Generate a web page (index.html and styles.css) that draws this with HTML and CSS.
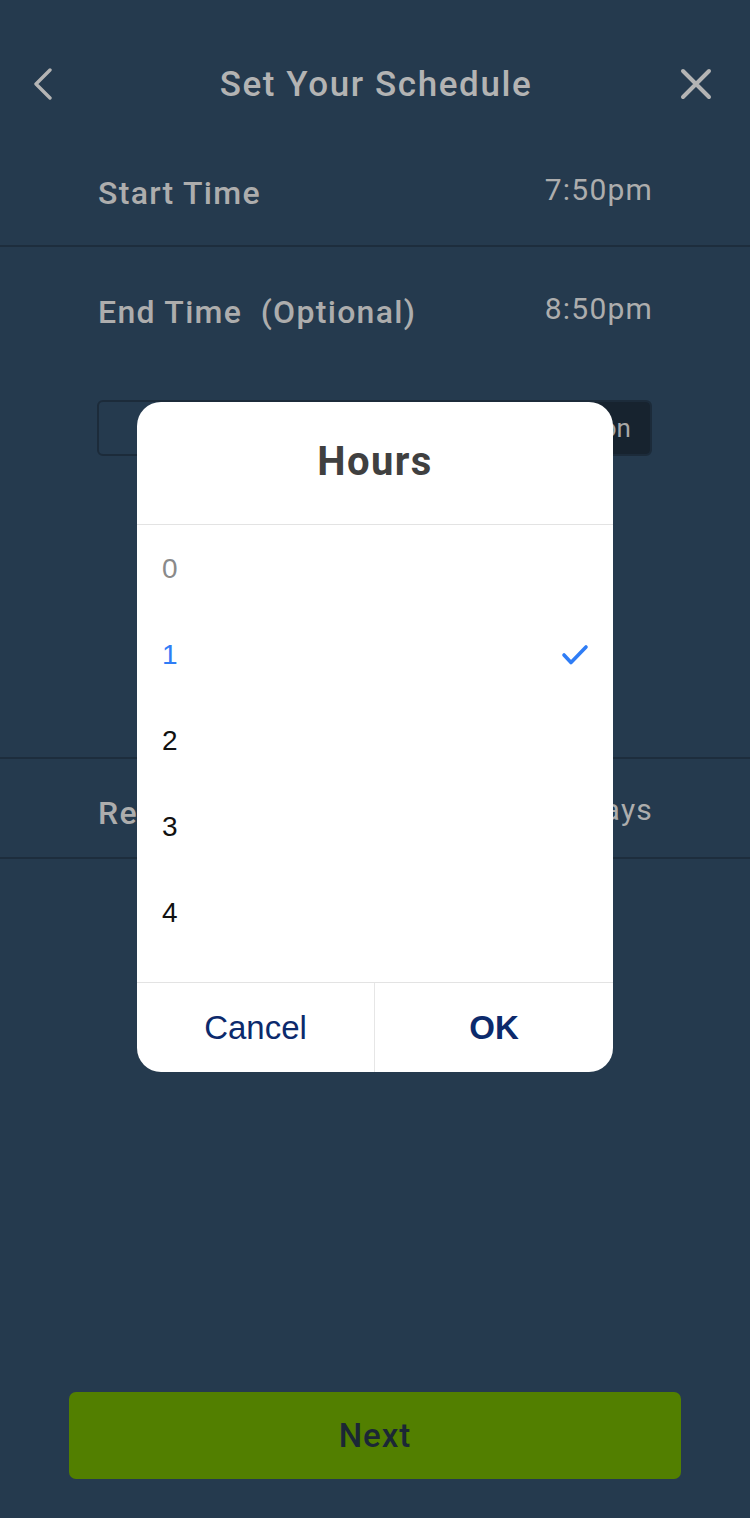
FILE: index.html
```html
<!DOCTYPE html>
<html lang="en">
<head>
<meta charset="utf-8">
<title>Set Your Schedule</title>
<link rel="stylesheet" href="styles.css">
</head>
<body>
<div class="screen">
  <header class="topbar">
    <span class="icon-btn back">
      <svg width="20" height="32" viewBox="0 0 20 32"><polyline points="17,2 3,16 17,30" fill="none" stroke="#b4b4b4" stroke-width="3.4" stroke-linecap="round" stroke-linejoin="round"/></svg>
    </span>
    <h1 class="title">Set Your Schedule</h1>
    <span class="icon-btn close">
      <svg width="34" height="34" viewBox="0 0 34 34"><path d="M4 4 L30 30 M30 4 L4 30" fill="none" stroke="#b4b4b4" stroke-width="4" stroke-linecap="round"/></svg>
    </span>
  </header>

  <section class="row row-start">
    <span class="label">Start Time</span>
    <span class="value">7:50pm</span>
  </section>

  <section class="end-block">
    <div class="row row-end">
      <span class="label">End Time&nbsp;&nbsp;(Optional)</span>
      <span class="value">8:50pm</span>
    </div>
    <div class="segmented">
      <span class="seg seg-left">End Time</span>
      <span class="seg seg-right">Duration</span>
    </div>
  </section>

  <section class="row row-repeat">
    <span class="label">Repeat</span>
    <span class="value">Weekdays</span>
  </section>

  <div class="spacer"></div>

  <button class="next-btn">Next</button>
</div>

<div class="overlay">
  <div class="dialog">
    <div class="dialog-title">Hours</div>
    <ul class="options">
      <li class="opt faded">0</li>
      <li class="opt selected">1
        <svg class="check" width="28" height="22" viewBox="0 0 28 22"><polyline points="3,11 10,18.5 25,3" fill="none" stroke="#2f7df6" stroke-width="3.6" stroke-linecap="round" stroke-linejoin="round"/></svg>
      </li>
      <li class="opt">2</li>
      <li class="opt">3</li>
      <li class="opt">4</li>
    </ul>
    <div class="actions">
      <span class="action cancel">Cancel</span>
      <span class="action ok">OK</span>
    </div>
  </div>
</div>
</body>
</html>
```

FILE: styles.css
```css
* { box-sizing: border-box; }

html, body {
  margin: 0;
  padding: 0;
}

body {
  width: 750px;
  height: 1518px;
  background: #253a4e;
  font-family: Roboto, "Liberation Sans", sans-serif;
  color: #adadad;
  overflow: hidden;
  position: relative;
}

.screen {
  display: flex;
  flex-direction: column;
  height: 1518px;
}

.topbar {
  height: 168px;
  display: grid;
  grid-template-columns: 120px 1fr 120px;
  align-items: center;
}

.icon-btn {
  display: flex;
  align-items: center;
}

.back {
  padding-left: 33px;
}

.close {
  justify-content: flex-end;
  padding-right: 37px;
}

.title {
  margin: 0;
  text-align: center;
  font-size: 35px;
  font-weight: 500;
  color: #b3b3b3;
  letter-spacing: 1.6px;
  padding-left: 2px;
}

.row {
  display: flex;
  justify-content: space-between;
  align-items: flex-start;
  padding: 0 98px;
}

.label {
  font-size: 32px;
  font-weight: 500;
  line-height: 36px;
  letter-spacing: 1.3px;
  color: #adadad;
  white-space: nowrap;
}

.value {
  font-size: 30px;
  font-weight: 400;
  line-height: 36px;
  letter-spacing: 1.2px;
  margin-right: -1px;
  margin-top: -3px;
  color: #adadad;
  white-space: nowrap;
}

.row-start {
  padding-top: 7px;
  height: 79px;
  border-bottom: 2px solid #1d2d3d;
}

.end-block {
  height: 512px;
  padding-top: 47px;
  border-bottom: 2px solid #1d2d3d;
}

.segmented {
  margin: 70px 98px 0 97px;
  height: 56px;
  display: flex;
  border: 2px solid #1c2b3a;
  border-radius: 6px;
  overflow: hidden;
}

.seg {
  display: flex;
  align-items: center;
  justify-content: center;
  font-size: 26px;
  color: #a7a7a7;
}

.seg-left {
  flex: 1;
}

.seg-right {
  width: 142px;
  background: #17232f;
  padding-left: 6px;
}

.row-repeat {
  height: 100px;
  padding-top: 36px;
  border-bottom: 2px solid #1d2d3d;
}

.spacer {
  flex: 1;
}

.next-btn {
  margin: 0 69px 39px;
  height: 87px;
  border: none;
  border-radius: 7px;
  background: #527f00;
  color: #1b2735;
  font-family: Roboto, "Liberation Sans", sans-serif;
  font-size: 33px;
  font-weight: 500;
  letter-spacing: 1px;
  padding: 0;
}

/* Modal */
.overlay {
  position: absolute;
  inset: 0;
}

.dialog {
  position: absolute;
  left: 137px;
  top: 402px;
  width: 476px;
  height: 670px;
  background: #ffffff;
  border-radius: 24px;
  overflow: hidden;
  display: flex;
  flex-direction: column;
}

.dialog-title {
  height: 123px;
  display: flex;
  align-items: center;
  justify-content: center;
  padding-bottom: 3px;
  font-family: Roboto, "Liberation Sans", sans-serif;
  font-weight: 700;
  font-size: 40px;
  letter-spacing: 1.4px;
  color: #404040;
  border-bottom: 1px solid #e3e3e3;
}

.options {
  list-style: none;
  margin: 0;
  padding: 0;
  height: 458px;
  overflow: hidden;
  border-bottom: 1px solid #e3e3e3;
}

.opt {
  height: 86px;
  display: flex;
  align-items: center;
  justify-content: space-between;
  padding: 2px 24px 0 25px;
  font-family: "Liberation Sans", Arial, sans-serif;
  font-size: 28px;
  color: #111111;
}

.opt.faded {
  color: #8a8a8a;
}

.opt.selected {
  color: #2f7df6;
}

.check {
  display: block;
}

.actions {
  flex: 1;
  display: grid;
  grid-template-columns: 1fr 1fr;
}

.action {
  display: flex;
  align-items: center;
  justify-content: center;
  font-family: "Liberation Sans", Arial, sans-serif;
  font-size: 33px;
  color: #0c2a6c;
}

.cancel {
  border-right: 1px solid #e6e6e6;
}

.ok {
  font-weight: 700;
}
```
